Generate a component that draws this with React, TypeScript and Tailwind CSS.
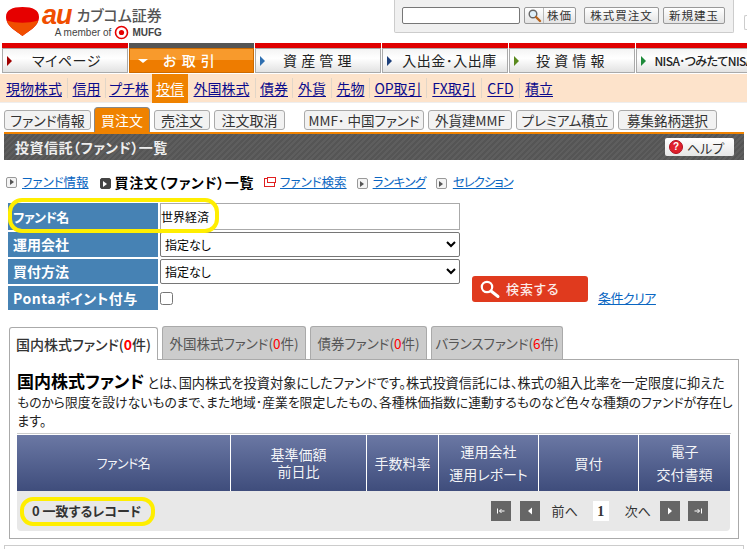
import { Fragment } from "react";

const mainNav = [
  { label: "マイページ", arrow: "border-l-[#a00000]", top: "bg-[#e00000]", w: "w-[126px]", pr: "pr-[6px]", small: false },
  { label: "お 取 引", arrow: "", top: "bg-[#555555]", w: "w-[125px]", active: true, pr: "", small: false },
  { label: "資 産 管 理", arrow: "border-l-[#2f6fb0]", top: "bg-[#e00000]", w: "w-[126px]", pr: "pr-[10px]", small: false },
  { label: "入出金･入出庫", arrow: "border-l-[#1c3f7a]", top: "bg-[#e00000]", w: "w-[126px]", pr: "", small: false },
  { label: "投 資 情 報", arrow: "border-l-[#5a8a1e]", top: "bg-[#e00000]", w: "w-[126px]", pr: "pr-[12px]", small: false },
  { label: "NISA･つみたてNISA", arrow: "border-l-[#1e8a3a]", top: "bg-[#e00000]", w: "w-[126px]", pr: "", small: true },
];

const subNav = [
  { label: "現物株式", w: "w-[66px]" },
  { label: "信用", w: "w-[37px]" },
  { label: "プチ株", w: "w-[46px]" },
  { label: "投信", w: "w-[36px]", active: true },
  { label: "外国株式", w: "w-[67px]" },
  { label: "債券", w: "w-[36px]" },
  { label: "外貨", w: "w-[38px]" },
  { label: "先物", w: "w-[37px]" },
  { label: "OP取引", w: "w-[56px]" },
  { label: "FX取引", w: "w-[54px]" },
  { label: "CFD", w: "w-[37px]" },
  { label: "積立", w: "w-[38px]" },
];

const tabsA = [
  { label: "ファンド情報", w: "w-[87px]" },
  { label: "買注文", w: "w-[56px] -ml-px", active: true },
  { label: "売注文", w: "w-[56px]" },
  { label: "注文取消", w: "w-[71px]" },
];

const tabsB = [
  { label: "MMF･ 中国ファンド", w: "w-[120px]" },
  { label: "外貨建MMF", w: "w-[84px]" },
  { label: "プレミアム積立", w: "w-[98px]" },
  { label: "募集銘柄選択", w: "w-[99px]" },
];

const formRows = [
  { label: "運用会社", h: "h-[25px]" },
  { label: "買付方法", h: "h-[25px]" },
];

const fundTabs = [
  { label: "外国株式ファンド", count: "0", w: "w-[144px]" },
  { label: "債券ファンド", count: "0", w: "w-[117px]" },
  { label: "バランスファンド", count: "6", w: "w-[132px]" },
];

function NavArrowBox({ dir }: { dir: "first" | "prev" | "next" | "last" }) {
  return (
    <div className="w-5 h-5 bg-[#666666] flex items-center justify-center">
      <svg width="12" height="12" viewBox="0 0 12 12" fill="none">
        {dir === "first" && <path d="M2.5 3.5v5M9.5 6H4.5M6.5 4L4.5 6l2 2" stroke="#fff" strokeWidth="1" />}
        {dir === "prev" && <path d="M8 2.5v7L4 6z" fill="#fff" />}
        {dir === "next" && <path d="M4 2.5v7L8 6z" fill="#fff" />}
        {dir === "last" && <path d="M9.5 3.5v5M2.5 6h5M5.5 4l2 2-2 2" stroke="#fff" strokeWidth="1" />}
      </svg>
    </div>
  );
}

function PlayBox({ dark }: { dark?: boolean }) {
  return (
    <span className={`inline-flex w-[11px] h-[11px] rounded-[2px] border items-center justify-center shrink-0 ${dark ? "bg-[#444444] border-[#444444]" : "bg-[#f4f4f4] border-[#999999]"}`}>
      <span className={`w-0 h-0 border-y-[3px] border-y-transparent border-l-[4px] ${dark ? "border-l-white" : "border-l-[#555555]"}`} />
    </span>
  );
}

function Logo() {
  return (
    <div className="flex items-start pl-[6px] pt-[6px]">
      <svg width="33" height="31" viewBox="0 0 33 31" className="shrink-0">
        <path d="M16.5 30C12 26 0 21 0 11 0 4 6 1 16.5 1S33 4 33 11c0 10-12 15-16.5 19z" fill="#e60000" />
        <path d="M16.5 30C12 26 3 22 .8 14.5c10 3 21 3 31.4 0C30 22 21 26 16.5 30z" fill="#f04e00" />
      </svg>
      <div className="ml-[3px] flex flex-col items-end">
        <div className="flex items-center h-[18px]">
          <span className="font-['Liberation_Sans',sans-serif] italic font-bold text-[27px] leading-[18px] text-[#f04e00] mr-[5px] tracking-[-1px]">au</span>
          <span className="text-[15px] leading-[18px] text-[#555555] font-medium">カブコム証券</span>
        </div>
        <div className="flex items-center h-[14px] mt-px font-['Liberation_Sans',sans-serif] text-[#444444] text-[10px]">
          <span>A member of</span>
          <svg width="15" height="15" viewBox="0 0 15 15" className="mx-[3px]">
            <circle cx="7.5" cy="7.5" r="6" fill="none" stroke="#e60000" strokeWidth="1.6" />
            <circle cx="7.5" cy="7.5" r="2.6" fill="#e60000" />
          </svg>
          <span className="font-bold">MUFG</span>
        </div>
      </div>
    </div>
  );
}

function SmallButton({ label, className }: { label: string; className: string }) {
  return (
    <button className={`h-[17px] rounded-[2px] border border-[#999999] bg-gradient-to-b from-white to-[#e4e4e4] text-[11.5px] leading-none tracking-[1px] text-[#333333] ${className}`}>
      {label}
    </button>
  );
}

export default function App() {
  return (
    <div className="relative w-[747px] h-[549px] overflow-hidden bg-white text-black font-['Noto_Sans_CJK_JP','Liberation_Sans',sans-serif] [font-feature-settings:'palt']">
      {/* Header */}
      <div className="flex justify-between h-[43px]">
        <Logo />
        <div className="flex items-start">
          <div className="w-[340px] h-[33px] bg-[#f0f0f0] border border-t-0 border-[#cccccc] rounded-b-[2px] flex items-start pt-[7px] pl-[7px]">
            <input className="w-[118px] h-[17px] bg-white border border-[#777777] rounded-[2px]" />
            <div className="ml-[4px] w-[52px] h-[17px] flex rounded-[2px] border border-[#999999] bg-gradient-to-b from-white to-[#e4e4e4]">
              <div className="w-[19px] flex items-center justify-center border-r border-[#bbbbbb]">
                <svg width="15" height="15" viewBox="0 0 15 15">
                  <circle cx="6" cy="6" r="3.8" fill="#dff0fa" stroke="#666666" strokeWidth="1.4" />
                  <path d="M9 9l4 4" stroke="#b8651f" strokeWidth="2.4" strokeLinecap="round" />
                </svg>
              </div>
              <span className="flex-1 text-center text-[11.5px] leading-[15px] tracking-[1px] text-[#333333]">株価</span>
            </div>
            <SmallButton label="株式買注文" className="ml-[8px] w-[75px]" />
            <SmallButton label="新規建玉" className="ml-[4px] w-[62px]" />
          </div>
          <div className="ml-[10px] mt-[15px] w-[3px] h-[15px] border border-r-0 border-[#cccccc] rounded-l-[2px]" />
        </div>
      </div>

      {/* Main nav */}
      <nav className="flex gap-px pl-[2px] h-[30px]">
        {mainNav.map((item) => (
          <div key={item.label} className={`${item.w} shrink-0 flex flex-col`}>
            <div className={`h-[5px] ${item.top}`} />
            {item.active ? (
              <div className="h-[25px] border border-[#cc6a00] bg-[linear-gradient(#f89a2c_0%,#f89a2c_50%,#ee7c00_50%,#ee7c00_100%)] flex items-center pl-[8px] text-white text-[14px] font-medium">
                <span className="w-0 h-0 border-x-[5px] border-x-transparent border-t-[4px] border-t-white" />
                <span className="flex-1 text-center pr-[22px] tracking-[1px]">{item.label}</span>
              </div>
            ) : (
              <div className={`h-[25px] border border-[#aaaaaa] bg-[linear-gradient(#f4f4f4_0%,#ffffff_40%,#e2e2e2_100%)] flex items-center pl-[4px] text-[#222222] ${item.pr}`}>
                <span className={`w-0 h-0 border-y-[5px] border-y-transparent border-l-[5px] ${item.arrow}`} />
                <span className={`flex-1 text-center whitespace-nowrap ${item.small ? "text-[12px] tracking-[-0.6px] font-medium" : "text-[14px] tracking-[0.5px]"}`}>{item.label}</span>
              </div>
            )}
          </div>
        ))}
      </nav>

      {/* Sub nav */}
      <div className="mt-px h-[29px] bg-[#fde3cb] flex items-center pl-px border-b border-[#eeeeee]">
        {subNav.map((item, i) => (
          <Fragment key={item.label}>
            {i > 0 && !item.active && !subNav[i - 1].active && <span className="w-px h-[20px] bg-[#e2d6c8] shrink-0" />}
            <a
              className={`${item.w} h-[29px] shrink-0 flex items-center justify-center text-[14px] underline underline-offset-2 whitespace-nowrap ${item.active ? "bg-[#ef8200] text-white" : "text-[#0a0a8c]"}`}
            >
              {item.label}
            </a>
          </Fragment>
        ))}
      </div>

      {/* Sub tabs */}
      <div className="flex items-end pl-[4px] mt-[4px] h-[25px]">
        <div className="flex gap-[4px] items-end">
          {tabsA.map((t) =>
            t.active ? (
              <div key={t.label} className={`${t.w} h-[25px] bg-[#ef8200] border border-b-0 border-[#888888] rounded-t-[4px] text-white text-[14px] flex items-center justify-center`}>
                {t.label}
              </div>
            ) : (
              <div key={t.label} className={`${t.w} h-[20px] mb-[2px] bg-[#f2f2f2] border border-[#aaaaaa] rounded-[3px] text-[#333333] text-[14px] flex items-center justify-center whitespace-nowrap`}>
                {t.label}
              </div>
            )
          )}
        </div>
        <div className="flex gap-[4px] ml-[19px] mb-[2px]">
          {tabsB.map((t) => (
            <div key={t.label} className={`${t.w} h-[20px] bg-[#f2f2f2] border border-[#aaaaaa] rounded-[3px] text-[#333333] text-[13.5px] flex items-center justify-center whitespace-nowrap`}>
              {t.label}
            </div>
          ))}
        </div>
      </div>

      {/* Title bar */}
      <div className="ml-[4px] w-[740px] h-[28px] border-t-2 border-[#ef8200] bg-[repeating-linear-gradient(135deg,#555555,#555555_2px,#5e5e5e_2px,#5e5e5e_4px)] flex items-center justify-between pl-[11px] pr-[10px]">
        <span className="text-[#eeeeee] text-[14px] font-bold tracking-[0.5px]">投資信託（ファンド）一覧</span>
        <div className="w-[69px] h-[18px] bg-gradient-to-b from-white to-[#e6e6e6] rounded-[2px] flex items-center pl-[4px] gap-[4px]">
          <span className="w-[14px] h-[14px] rounded-full bg-[#e0202c] border border-[#b01020] text-white text-[10px] font-bold leading-none flex items-center justify-center font-['Liberation_Sans',sans-serif]">?</span>
          <span className="text-[13px] leading-none text-[#333333]">ヘルプ</span>
        </div>
      </div>

      {/* Links */}
      <div className="flex items-center h-[18px] mt-[13px] pl-[6px] text-[12.5px] whitespace-nowrap">
        <PlayBox />
        <a className="ml-[5px] text-[#0a66c2] underline">ファンド情報</a>
        <span className="ml-[11px]"><PlayBox dark /></span>
        <span className="ml-[4px] font-bold text-[14px] tracking-[0.6px]">買注文（ファンド）一覧</span>
        <span className="ml-[10px] relative w-[11px] h-[9px] border border-[#e02020]">
          <span className="absolute -top-[2px] left-[2px] w-[9px] h-[6px] border border-[#e02020] bg-white" />
        </span>
        <a className="ml-[5px] text-[#0a66c2] underline">ファンド検索</a>
        <span className="ml-[10px]"><PlayBox /></span>
        <a className="ml-[5px] text-[#0a66c2] underline tracking-[-0.5px]">ランキング</a>
        <span className="ml-[10px]"><PlayBox /></span>
        <a className="ml-[6px] text-[#0a66c2] underline tracking-[-1px]">セレクション</a>
      </div>

      {/* Search form */}
      <div className="flex mt-[12px] pl-[8px]">
        <div className="w-[452px] flex flex-col gap-[2px]">
          <div className="flex h-[27px]">
            <div className="w-[150px] bg-[#4682b4] text-white text-[13px] tracking-[-0.5px] font-bold flex items-center pl-[5px]">ファンド名</div>
            <div className="ml-[2px] flex-1 border border-[#aaaaaa] flex items-center text-[12px]">世界経済</div>
          </div>
          {formRows.map((row) => (
            <div key={row.label} className={`flex ${row.h}`}>
              <div className="w-[150px] bg-[#4682b4] text-white text-[14px] font-bold flex items-center pl-[5px]">{row.label}</div>
              <select className="ml-[2px] flex-1 border border-[#767676] rounded-[2px] text-[12px] text-black">
                <option>指定なし</option>
              </select>
            </div>
          ))}
          <div className="flex h-[24px]">
            <div className="w-[150px] bg-[#4682b4] text-white text-[14px] tracking-[0.5px] font-bold flex items-center pl-[5px] whitespace-nowrap">Pontaポイント付与</div>
            <div className="ml-[2px] flex items-center">
              <input type="checkbox" className="w-[13px] h-[13px]" />
            </div>
          </div>
        </div>
        <div className="flex items-end ml-[12px] pb-[6px]">
          <button className="w-[116px] h-[26px] mb-[2px] rounded-[3px] bg-[#e03a1e] flex items-center pl-[7px] gap-[5px] text-white/90 text-[13px] font-medium tracking-[1px]">
            <svg width="22" height="20" viewBox="0 0 22 20" fill="none">
              <circle cx="8" cy="8" r="5.2" stroke="#fff" strokeWidth="2.2" />
              <path d="M12 12l7 5.5" stroke="#fff" strokeWidth="3" strokeLinecap="round" />
            </svg>
            検索する
          </button>
          <a className="ml-[10px] -mb-[3px] text-[13px] text-[#0a66c2] underline whitespace-nowrap tracking-[-0.5px]">条件クリア</a>
        </div>
      </div>

      {/* Fund tabs */}
      <div className="flex items-end ml-[9px] mt-[16px] h-[33px] gap-[4px] relative z-10">
        <div className="w-[149px] h-[33px] -mb-px bg-white border border-b-0 border-[#aaaaaa] rounded-t-[3px] flex items-center justify-center text-[14px] text-[#333333] font-medium whitespace-nowrap">
          国内株式ファンド(<span className="text-[#ff0000] font-bold">0</span>件)
        </div>
        {fundTabs.map((t) => (
          <div key={t.label} className={`${t.w} h-[33px] bg-[#cccccc] border border-b-0 border-[#aaaaaa] rounded-t-[3px] flex items-center justify-center text-[13.5px] text-[#555555] whitespace-nowrap`}>
            {t.label}(<span className="text-[#ff0000]">{t.count}</span>件)
          </div>
        ))}
      </div>

      {/* Panel */}
      <div className="ml-[9px] w-[730px] h-[180px] border border-[#aaaaaa] pt-[11px] px-[7px]">
        <p className="text-[13.2px] leading-[19px] text-[#222222] whitespace-nowrap">
          <span className="text-[17px] font-bold text-black">国内株式ファンド</span> とは、国内株式を投資対象にしたファンドです。株式投資信託には、株式の組入比率を一定限度に抑えた<br /><span className="text-[12.8px]">ものから限度を設けないものまで、また地域･産業を限定したもの、各種株価指数に連動するものなど色々な種類のファンドが存在し</span><br />ます。
        </p>
        <div className="mt-[3px] border-t border-[#cccccc] flex h-[58px] text-[14px] text-white/95 text-center bg-white gap-px pt-px">
          <div className="w-[213px] flex items-center justify-center text-[13px] tracking-[-0.5px] bg-gradient-to-b from-[#6b78a4] to-[#3f4d7c]">ファンド名</div>
          <div className="w-[135px] flex items-center justify-center leading-[17px] bg-gradient-to-b from-[#6b78a4] to-[#3f4d7c]">基準価額<br />前日比</div>
          <div className="w-[71px] flex items-center justify-center bg-gradient-to-b from-[#6b78a4] to-[#3f4d7c] whitespace-nowrap">手数料率</div>
          <div className="w-[99px] flex items-center justify-center leading-[23px] bg-gradient-to-b from-[#6b78a4] to-[#3f4d7c]">運用会社<br />運用レポート</div>
          <div className="w-[99px] flex items-center justify-center bg-gradient-to-b from-[#6b78a4] to-[#3f4d7c]">買付</div>
          <div className="w-[91px] flex items-center justify-center leading-[23px] bg-gradient-to-b from-[#6b78a4] to-[#3f4d7c]">電子<br />交付書類</div>
        </div>
        <div className="w-[713px] h-[40px] bg-[#e8e8e8] rounded-b-[4px] flex items-center justify-between pl-[15px] pr-[22px] text-[13px] text-[#333333]">
          <span className="font-bold">0 一致するレコード</span>
          <div className="flex items-center">
            <NavArrowBox dir="first" />
            <span className="ml-[9px]"><NavArrowBox dir="prev" /></span>
            <span className="ml-[12px]">前へ</span>
            <span className="ml-[15px] w-[16px] h-[20px] bg-white flex items-center justify-center font-bold font-['Liberation_Serif',serif] text-[14px]">1</span>
            <span className="ml-[16px]">次へ</span>
            <span className="ml-[9px]"><NavArrowBox dir="next" /></span>
            <span className="ml-[8px]"><NavArrowBox dir="last" /></span>
          </div>
        </div>
      </div>

      {/* Next section edge */}
      <div className="ml-[4px] mt-[6px] w-[740px] h-[10px] border border-[#cccccc]" />

      {/* Yellow markers */}
      <div className="absolute left-[8px] top-[198px] w-[211px] h-[35px] border-4 border-[#ffee00] rounded-[14px]" />
      <div className="absolute left-[20px] top-[497px] w-[135px] h-[29px] border-4 border-[#ffee00] rounded-[13px]" />
    </div>
  );
}
